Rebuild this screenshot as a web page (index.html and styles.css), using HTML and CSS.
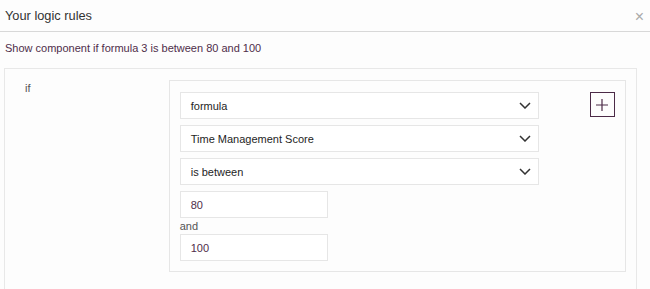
FILE: index.html
```html
<!DOCTYPE html>
<html>
<head>
<meta charset="UTF-8" />
<title>Your logic rules</title>
<link rel="stylesheet" href="styles.css">
</head>
<body>
<div class="modal">
	<div class="modal-header">
		<h1>Your logic rules</h1>
		<span class="close">&times;</span>
	</div>
	<div class="summary">Show component if formula 3 is between 80 and 100</div>
	<div class="rules">
		<div class="cond">if</div>
		<div class="group">
			<div class="fields">
				<div class="select">formula<svg class="chev" width="12" height="7" viewBox="0 0 12 7"><path d="M1 1l5 5 5-5" fill="none" stroke="#333" stroke-width="1.5"/></svg></div>
				<div class="select">Time Management Score<svg class="chev" width="12" height="7" viewBox="0 0 12 7"><path d="M1 1l5 5 5-5" fill="none" stroke="#333" stroke-width="1.5"/></svg></div>
				<div class="select">is between<svg class="chev" width="12" height="7" viewBox="0 0 12 7"><path d="M1 1l5 5 5-5" fill="none" stroke="#333" stroke-width="1.5"/></svg></div>
				<div class="input">80</div>
				<div class="and">and</div>
				<div class="input">100</div>
			</div>
			<div class="add"><svg width="12" height="12" viewBox="0 0 12 12"><path d="M6 0v12M0 6h12" stroke="#4b2a47" stroke-width="1.2"/></svg></div>
		</div>
	</div>
</div>
</body>
</html>
```
FILE: styles.css
```css
body{margin:0;background:#fdfdfd;font-family:"Liberation Sans",Arial,sans-serif;color:#333;}
.modal{height:289px;overflow:hidden;}
.modal-header{display:flex;align-items:center;justify-content:space-between;height:31px;border-bottom:1px solid #d8d8d8;padding:0 6px 0 5px;}
.modal-header h1{font-size:12.8px;font-weight:normal;margin:0;color:#333;}
.close{color:#aaa;font-size:16px;line-height:1;margin-top:2px;}
.summary{color:#4f2d4a;font-size:11px;padding:10px 5px 0 5px;height:26px;}
.rules{display:flex;margin:0 13px 0 4px;border:1px solid #e8e8e8;border-bottom:none;padding:10px 10px 20px 20px;height:240px;box-sizing:border-box;}
.cond{width:144px;font-size:11px;color:#555;padding-top:3px;}
.group{display:flex;border:1px solid #e6e6e6;width:458px;height:192px;box-sizing:border-box;padding:11px 10px 0 10px;margin-top:1px;}
.fields{display:flex;flex-direction:column;gap:6px;width:359px;}
.select,.input{display:flex;align-items:center;justify-content:space-between;height:27px;box-sizing:border-box;border:1px solid #e6e6e6;background:#fff;padding:0 7px 0 10px;font-size:11px;color:#1e1e1e;}
.input{width:148px;color:#4f2d4a;}
.and{font-size:11px;color:#555;margin:-6px 0 -6px 0;line-height:16px;}
.add{margin-left:51px;width:25px;height:25px;box-sizing:border-box;border:1.5px solid #4b2a47;display:flex;align-items:center;justify-content:center;}
```
